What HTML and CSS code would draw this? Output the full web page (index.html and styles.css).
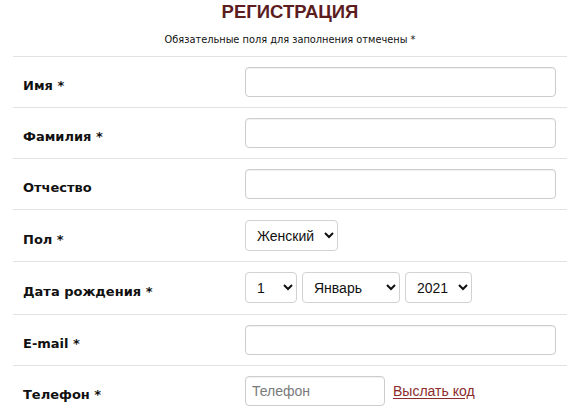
FILE: index.html
```html
<!DOCTYPE html>
<html lang="ru">
<head>
<meta charset="utf-8">
<title>Регистрация</title>
<link rel="stylesheet" href="styles.css">
</head>
<body>
<form class="reg">
  <header class="reg-head">
    <h1 class="reg-title">РЕГИСТРАЦИЯ</h1>
    <p class="reg-note">Обязательные поля для заполнения отмечены *</p>
  </header>

  <div class="row">
    <label class="label" for="f-name">Имя *</label>
    <div class="field"><input class="text" id="f-name" type="text"></div>
  </div>

  <div class="row">
    <label class="label" for="f-surname">Фамилия *</label>
    <div class="field"><input class="text" id="f-surname" type="text"></div>
  </div>

  <div class="row">
    <label class="label" for="f-patronymic">Отчество</label>
    <div class="field"><input class="text" id="f-patronymic" type="text"></div>
  </div>

  <div class="row">
    <label class="label" for="f-sex">Пол *</label>
    <div class="field">
      <select class="sel sel-sex" id="f-sex">
        <option>Женский</option>
        <option>Мужской</option>
      </select>
    </div>
  </div>

  <div class="row row-date">
    <label class="label" for="f-day">Дата рождения *</label>
    <div class="field">
      <select class="sel sel-day" id="f-day"><option>1</option></select>
      <select class="sel sel-month"><option>Январь</option></select>
      <select class="sel sel-year"><option>2021</option></select>
    </div>
  </div>

  <div class="row">
    <label class="label" for="f-mail">E-mail *</label>
    <div class="field"><input class="text" id="f-mail" type="email"></div>
  </div>

  <div class="row">
    <label class="label" for="f-phone">Телефон *</label>
    <div class="field">
      <input class="text text-phone" id="f-phone" type="tel" placeholder="Телефон">
      <a class="send-code" href="#">Выслать код</a>
    </div>
  </div>
</form>
</body>
</html>
```

FILE: styles.css
```css
html, body {
  margin: 0;
  padding: 0;
  background: #fff;
}

.reg {
  width: 554px;
  margin-left: 13px;
  font-family: "DejaVu Sans", Verdana, sans-serif;
  color: #000;
}

.reg-head {
  text-align: center;
  height: 56px;
}

.reg-title {
  margin: 0;
  padding-top: 1px;
  font-family: "Liberation Sans", Arial, sans-serif;
  font-size: 18.5px;
  line-height: 21px;
  font-weight: bold;
  color: #5b1d1d;
}

.reg-note {
  margin: 11px 0 0;
  font-size: 9.8px;
  line-height: 14px;
  color: #111;
}

.row {
  display: flex;
  align-items: center;
  border-top: 1px solid #e2e2e2;
  padding: 10px 11px 10px 10px;
}

.row-date {
  padding-bottom: 11px;
}

.label {
  width: 222px;
  padding-top: 7px;
  font-size: 13px;
  font-weight: bold;
  color: #111;
}

.field {
  flex: 1;
  display: flex;
  align-items: center;
  gap: 5px;
}

.text {
  box-sizing: border-box;
  width: 311px;
  height: 30px;
  margin: 0;
  padding: 0 6px;
  border: 1px solid #cdcdcd;
  border-radius: 4px;
  box-shadow: inset 0 1px 1px rgba(0, 0, 0, 0.06);
  font-family: "Liberation Sans", Arial, sans-serif;
  font-size: 14px;
  color: #333;
  background: #fff;
  outline: none;
}

.text::placeholder {
  color: #7a7a7a;
}

.text-phone {
  width: 140px;
}

.sel {
  box-sizing: border-box;
  height: 31px;
  margin: 0;
  padding: 0 4px 0 7px;
  border: 1px solid #d2d2d2;
  border-radius: 4px;
  background-color: #fff;
  font-family: "Liberation Sans", Arial, sans-serif;
  font-size: 14px;
  color: #111;
}

.sel-sex { width: 93px; }
.sel-day { width: 52px; }
.sel-month { width: 98px; }
.sel-year { width: 67px; }

.send-code {
  margin-left: 3px;
  font-family: "Liberation Sans", Arial, sans-serif;
  font-size: 14px;
  color: #8b2c2c;
  text-decoration: underline;
  text-underline-offset: 2px;
}
```
